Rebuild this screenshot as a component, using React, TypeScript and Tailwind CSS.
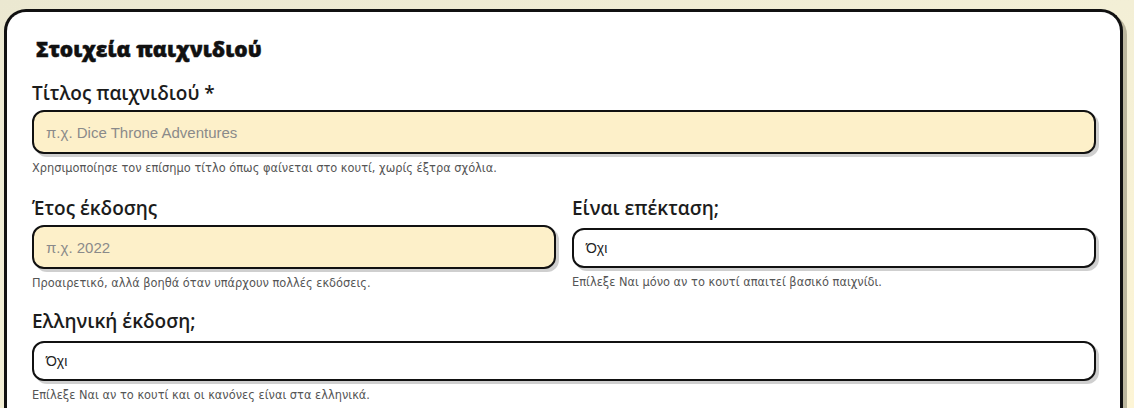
import React from 'react';

const labelCls =
  "block text-[19px] leading-[26px] font-semibold text-[#1c1c1c] font-['Open_Sans','Noto_Sans',sans-serif]";
const helpCls =
  "mt-[6px] text-[11.4px] leading-4 text-[#555] font-['DejaVu_Sans',Verdana,sans-serif]";
const inputCls =
  "block w-full h-11 rounded-xl border-2 border-[#111] bg-[#fdf0c9] px-3 text-[15px] text-[#222] shadow-[3px_3px_0_#cfcfcf] outline-none placeholder:text-[#8a8a8a] font-['Liberation_Sans',Arial,sans-serif]";
const selectCls =
  "mt-[7px] flex h-10 w-full items-center rounded-xl border-2 border-[#111] bg-white px-3 text-[14px] text-[#222] shadow-[3px_3px_0_#cfcfcf] font-['Liberation_Sans',Arial,sans-serif]";

const TextField = ({ label, placeholder, help }: { label: string; placeholder: string; help: string }) => (
  <div>
    <label className={labelCls}>{label}</label>
    <div className="mt-1">
      <input className={inputCls} placeholder={placeholder} />
    </div>
    <p className={helpCls}>{help}</p>
  </div>
);

const SelectField = ({ label, value, help }: { label: string; value: string; help: string }) => (
  <div>
    <label className={labelCls}>{label}</label>
    <div className={selectCls}>{value}</div>
    <p className={helpCls}>{help}</p>
  </div>
);

export default function App() {
  return (
    <div className="h-[408px] overflow-hidden bg-gradient-to-br from-[#ebe8d1] via-[#f3efd6] to-[#fdf5d6] pl-1 pr-[11px] pt-[9px]">
      <div className="h-[420px] rounded-t-[22px] border-[3px] border-b-0 border-[#111] bg-white pl-[25px] pr-[24px] pt-[22px] shadow-[4px_4px_0_#bcb79e]">
        <h2 className="ml-1 text-[21px] leading-[30px] font-extrabold text-[#111] [-webkit-text-stroke:0.5px_#111] font-['Open_Sans','Noto_Sans',sans-serif]">
          Στοιχεία παιχνιδιού
        </h2>

        <div className="mt-4">
          <TextField
            label="Τίτλος παιχνιδιού *"
            placeholder="π.χ. Dice Throne Adventures"
            help="Χρησιμοποίησε τον επίσημο τίτλο όπως φαίνεται στο κουτί, χωρίς έξτρα σχόλια."
          />
        </div>

        <div className="mt-[19px] grid grid-cols-2 gap-x-4">
          <TextField
            label="Έτος έκδοσης"
            placeholder="π.χ. 2022"
            help="Προαιρετικό, αλλά βοηθά όταν υπάρχουν πολλές εκδόσεις."
          />
          <SelectField
            label="Είναι επέκταση;"
            value="Όχι"
            help="Επίλεξε Ναι μόνο αν το κουτί απαιτεί βασικό παιχνίδι."
          />
        </div>

        <div className="mt-[17px]">
          <SelectField
            label="Ελληνική έκδοση;"
            value="Όχι"
            help="Επίλεξε Ναι αν το κουτί και οι κανόνες είναι στα ελληνικά."
          />
        </div>
      </div>
    </div>
  );
}
